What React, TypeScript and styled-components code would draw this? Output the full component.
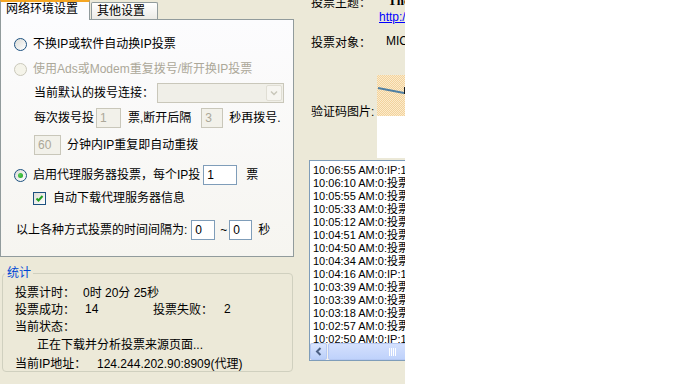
import styled, { createGlobalStyle } from "styled-components";

const GlobalStyle = createGlobalStyle`
  html, body {
    margin: 0;
    padding: 0;
    background: #ffffff;
  }
  body {
    font-family: "Liberation Sans", "Noto Sans CJK SC", sans-serif;
    font-size: 12px;
    color: #000000;
  }
`;

const Window = styled.div`
  width: 405px;
  height: 384px;
  background: #ece9d8;
  display: flex;
  overflow: hidden;
`;

const LeftCol = styled.div`
  width: 300px;
  flex-shrink: 0;
  display: flex;
  flex-direction: column;
`;

const TabStrip = styled.div`
  height: 19px;
  display: flex;
  align-items: flex-end;
  position: relative;
  z-index: 1;
`;

const ActiveTab = styled.div`
  width: 83px;
  height: 18px;
  margin-bottom: -1px;
  background: #fcfcfe;
  border-top: 2px solid #f5a623;
  border-left: 1px solid #919b9c;
  border-right: 1px solid #919b9c;
  padding-left: 5px;
  line-height: 14px;
`;

const Tab = styled.div`
  width: 60px;
  height: 16px;
  margin-left: 1px;
  background: linear-gradient(#ffffff, #ecebe6);
  border: 1px solid #919b9c;
  border-bottom: none;
  border-radius: 2px 2px 0 0;
  padding-left: 5px;
  line-height: 17px;
`;

const TabPanel = styled.div`
  width: 292px;
  height: 222px;
  border: 1px solid #919b9c;
  background: linear-gradient(#fcfcfe, #f6f5f0);
  display: flex;
  flex-direction: column;
  padding-top: 14px;
`;

const Row = styled.div<{ $top: number; $indent: number }>`
  height: 20px;
  display: flex;
  align-items: center;
  margin-top: ${(p) => p.$top}px;
  padding-left: ${(p) => p.$indent}px;
  white-space: nowrap;
`;

const Text = styled.span<{ $ml?: number; $muted?: boolean }>`
  margin-left: ${(p) => p.$ml ?? 0}px;
  color: ${(p) => (p.$muted ? "#aca899" : "#000000")};
  line-height: 14px;
`;

const Radio = styled.span<{ $checked?: boolean; $disabled?: boolean }>`
  width: 11px;
  height: 11px;
  border-radius: 50%;
  border: 1px solid ${(p) => (p.$disabled ? "#cac8bb" : "#1c5180")};
  background: ${(p) =>
    p.$disabled ? "#f5f4ea" : "linear-gradient(135deg, #dcdcd7, #ffffff)"};
  margin-right: 6px;
  display: flex;
  align-items: center;
  justify-content: center;
  flex-shrink: 0;

  &::after {
    content: "";
    display: ${(p) => (p.$checked ? "block" : "none")};
    width: 5px;
    height: 5px;
    border-radius: 50%;
    background: radial-gradient(circle at 35% 35%, #55d055, #21a121);
  }
`;

const CheckBox = styled.span`
  width: 11px;
  height: 11px;
  border: 1px solid #1c5180;
  background: linear-gradient(135deg, #dcdcd7, #ffffff);
  margin-right: 7px;
  display: flex;
  align-items: center;
  justify-content: center;
  flex-shrink: 0;
`;

const Field = styled.input<{ $w: number; $ml?: number }>`
  width: ${(p) => p.$w}px;
  height: 20px;
  margin: 0 0 0 ${(p) => p.$ml ?? 0}px;
  box-sizing: border-box;
  border: 1px solid #7f9db9;
  background: #ffffff;
  font-family: "Liberation Sans", sans-serif;
  font-size: 12px;
  padding: 0 3px;
  color: #000000;
  outline: none;

  &:disabled {
    border-color: #c9c7ba;
    background: #f2f1ea;
    color: #aca899;
  }
`;

const Combo = styled.div<{ $ml: number }>`
  width: 127px;
  height: 20px;
  margin-left: ${(p) => p.$ml}px;
  box-sizing: border-box;
  border: 1px solid #c9c7ba;
  background: #f0efe8;
  display: flex;
  justify-content: flex-end;
  align-items: center;
  padding-right: 1px;
`;

const ComboButton = styled.div`
  width: 16px;
  height: 16px;
  box-sizing: border-box;
  border: 1px solid #e0ded4;
  border-radius: 2px;
  background: #f6f5f0;
  display: flex;
  align-items: center;
  justify-content: center;
`;

const GroupBox = styled.fieldset`
  margin: 9px 0 0 2px;
  padding: 0 0 0 2px;
  width: 291px;
  height: 106px;
  box-sizing: border-box;
  border: 1px solid #d0d0bf;
  border-radius: 4px;
`;

const Legend = styled.legend`
  padding: 0 2px;
  color: #0046d5;
  line-height: 14px;
  font-size: 12px;
`;

const StatBody = styled.div`
  padding: 3px 0 0 10px;
  display: flex;
  flex-direction: column;
`;

const StatRow = styled.div<{ $top?: number; $indent?: number }>`
  height: 17px;
  display: flex;
  align-items: center;
  margin-top: ${(p) => p.$top ?? 0}px;
  padding-left: ${(p) => p.$indent ?? 0}px;
  white-space: nowrap;
`;

const Cell = styled.span<{ $w?: number }>`
  width: ${(p) => (p.$w ? `${p.$w}px` : "auto")};
  flex-shrink: 0;
`;

const RightCol = styled.div`
  flex: 1;
  min-width: 0;
  padding-left: 9px;
  display: flex;
  flex-direction: column;
  overflow: hidden;
`;

const InfoRow = styled.div<{ $top: number; $pl?: number }>`
  height: 14px;
  display: flex;
  align-items: center;
  margin-top: ${(p) => p.$top}px;
  padding-left: ${(p) => p.$pl ?? 2}px;
  white-space: nowrap;
  flex-shrink: 0;
`;

const InfoLabel = styled.span<{ $w: number }>`
  width: ${(p) => p.$w}px;
  flex-shrink: 0;
`;

const Title = styled.span`
  font-family: "Liberation Serif", serif;
  font-weight: bold;
  font-size: 13px;
`;

const Link = styled.span`
  color: #0000ff;
  text-decoration: underline;
`;

const CaptchaRow = styled.div`
  display: flex;
  margin-top: 27px;
  padding-left: 2px;
  flex-shrink: 0;
`;

const CaptchaLabel = styled.span`
  width: 66px;
  flex-shrink: 0;
  margin-top: 30px;
  line-height: 14px;
  height: 14px;
`;

const CaptchaBox = styled.div`
  width: 80px;
  height: 83px;
  flex-shrink: 0;
  background: #ffffff;
`;

const CaptchaImage = styled.div`
  width: 80px;
  height: 41px;
  background: repeating-conic-gradient(#f2d29c 0 25%, #fcebcb 0 50%) 0 0 / 2px 2px;
`;

const LogBox = styled.div`
  margin-top: 2px;
  width: 130px;
  height: 201px;
  flex-shrink: 0;
  box-sizing: border-box;
  border: 1px solid #7f9db9;
  background: #ffffff;
  display: flex;
  flex-direction: column;
`;

const LogLines = styled.div`
  flex: 1;
  overflow: hidden;
  padding: 3px 0 0 3px;
`;

const LogLine = styled.div`
  height: 13px;
  line-height: 13px;
  font-size: 11px;
  white-space: nowrap;
`;

const HScroll = styled.div`
  height: 17px;
  display: flex;
  background: #f3f1ec;
`;

const ScrollButton = styled.div`
  width: 17px;
  height: 17px;
  box-sizing: border-box;
  border: 1px solid #b5c8f3;
  border-radius: 2px;
  background: linear-gradient(#dbe5fd, #bacff9);
  display: flex;
  align-items: center;
  justify-content: center;
`;

const ScrollThumb = styled.div`
  flex: 1;
  margin-left: 1px;
  box-sizing: border-box;
  border: 1px solid #b5c8f3;
  border-radius: 2px;
  background: linear-gradient(#d4e0fd, #bfd2fb);
  display: flex;
  align-items: center;
  padding-left: 60px;
`;

const logs = [
  "10:06:55 AM:0:IP:124.244.202.90",
  "10:06:10 AM:0:投票成功",
  "10:05:55 AM:0:投票成功",
  "10:05:33 AM:0:投票成功",
  "10:05:12 AM:0:投票成功",
  "10:04:51 AM:0:投票成功",
  "10:04:50 AM:0:投票成功",
  "10:04:34 AM:0:投票成功",
  "10:04:16 AM:0:IP:124.244.202.90",
  "10:03:39 AM:0:投票成功",
  "10:03:39 AM:0:投票成功",
  "10:03:18 AM:0:投票成功",
  "10:02:57 AM:0:投票成功",
  "10:02:50 AM:0:IP:124.244.202.90",
];

function App() {
  return (
    <>
      <GlobalStyle />
      <Window>
        <LeftCol>
          <TabStrip>
            <ActiveTab>网络环境设置</ActiveTab>
            <Tab>其他设置</Tab>
          </TabStrip>
          <TabPanel>
            <Row $top={0} $indent={13}>
              <Radio />
              <Text>不换IP或软件自动换IP投票</Text>
            </Row>
            <Row $top={5} $indent={13}>
              <Radio $disabled />
              <Text $muted>使用Ads或Modem重复拨号/断开换IP投票</Text>
            </Row>
            <Row $top={4} $indent={33}>
              <Text>当前默认的拨号连接：</Text>
              <Combo $ml={3}>
                <ComboButton>
                  <svg width="8" height="6" viewBox="0 0 8 6">
                    <path d="M1 1.5 L4 4.5 L7 1.5" stroke="#c9c7ba" strokeWidth="1.5" fill="none" />
                  </svg>
                </ComboButton>
              </Combo>
            </Row>
            <Row $top={5} $indent={33}>
              <Text>每次拨号投</Text>
              <Field $w={25} $ml={2} value="1" disabled readOnly />
              <Text $ml={7}>票,断开后隔</Text>
              <Field $w={22} $ml={10} value="3" disabled readOnly />
              <Text $ml={6}>秒再拨号.</Text>
            </Row>
            <Row $top={7} $indent={33}>
              <Field $w={27} value="60" disabled readOnly />
              <Text $ml={6}>分钟内IP重复即自动重拨</Text>
            </Row>
            <Row $top={10} $indent={13}>
              <Radio $checked />
              <Text>启用代理服务器投票，每个IP投</Text>
              <Field $w={34} $ml={3} value="1" readOnly />
              <Text $ml={9}>票</Text>
            </Row>
            <Row $top={3} $indent={32}>
              <CheckBox>
                <svg width="9" height="9" viewBox="0 0 9 9">
                  <path d="M1.5 4.5 L3.5 6.5 L7.5 2" stroke="#21a121" strokeWidth="2" fill="none" />
                </svg>
              </CheckBox>
              <Text>自动下载代理服务器信息</Text>
            </Row>
            <Row $top={12} $indent={15}>
              <Text>以上各种方式投票的时间间隔为:</Text>
              <Field $w={24} $ml={4} value="0" readOnly />
              <Text $ml={5}>~</Text>
              <Field $w={23} $ml={2} value="0" readOnly />
              <Text $ml={6}>秒</Text>
            </Row>
          </TabPanel>
          <GroupBox>
            <Legend>统计</Legend>
            <StatBody>
              <StatRow>
                <Cell $w={68}>投票计时：</Cell>
                <Cell>0时 20分 25秒</Cell>
              </StatRow>
              <StatRow>
                <Cell $w={70}>投票成功：</Cell>
                <Cell $w={68}>14</Cell>
                <Cell $w={71}>投票失败：</Cell>
                <Cell>2</Cell>
              </StatRow>
              <StatRow>
                <Cell>当前状态：</Cell>
              </StatRow>
              <StatRow $top={1} $indent={22}>
                <Cell>正在下载并分析投票来源页面...</Cell>
              </StatRow>
              <StatRow $top={2}>
                <Cell $w={82}>当前IP地址：</Cell>
                <Cell>124.244.202.90:8909(代理)</Cell>
              </StatRow>
            </StatBody>
          </GroupBox>
        </LeftCol>
        <RightCol>
          <InfoRow $top={-6}>
            <InfoLabel $w={77}>投票主题：</InfoLabel>
            <Title>The Voice</Title>
          </InfoRow>
          <InfoRow $top={2} $pl={70}>
            <Link>http://vote.example</Link>
          </InfoRow>
          <InfoRow $top={10}>
            <InfoLabel $w={75}>投票对象：</InfoLabel>
            <span>MICHAEL</span>
          </InfoRow>
          <CaptchaRow>
            <CaptchaLabel>验证码图片:</CaptchaLabel>
            <CaptchaBox>
              <CaptchaImage>
                <svg width="80" height="41" viewBox="0 0 80 41">
                  <path d="M1 13 L27 18" stroke="#4f7fa3" strokeWidth="2" fill="none" />
                  <path d="M27 12 L29 12 L29 19 L27 19 Z" fill="#1d1d1d" />
                </svg>
              </CaptchaImage>
            </CaptchaBox>
          </CaptchaRow>
          <LogBox>
            <LogLines>
              {logs.map((line, i) => (
                <LogLine key={i}>{line}</LogLine>
              ))}
            </LogLines>
            <HScroll>
              <ScrollButton>
                <svg width="8" height="9" viewBox="0 0 8 9">
                  <path d="M5.5 1 L2 4.5 L5.5 8" stroke="#4d6185" strokeWidth="2" fill="none" />
                </svg>
              </ScrollButton>
              <ScrollThumb>
                <svg width="8" height="8" viewBox="0 0 8 8">
                  <path d="M0.5 0 V8 M2.5 0 V8 M4.5 0 V8 M6.5 0 V8" stroke="#ffffff" strokeWidth="1" />
                </svg>
              </ScrollThumb>
            </HScroll>
          </LogBox>
        </RightCol>
      </Window>
    </>
  );
}

export default App;
